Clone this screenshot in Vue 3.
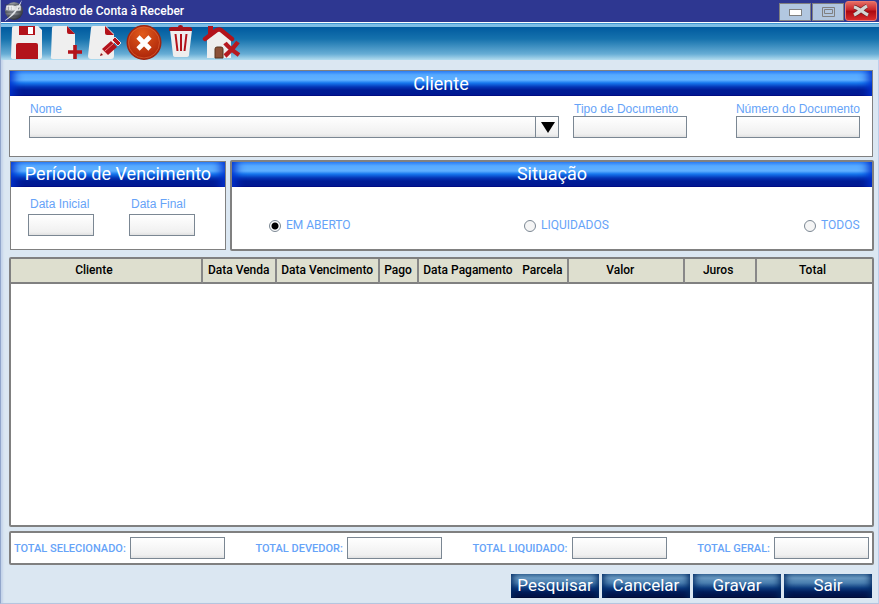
<script setup>
import { ref } from 'vue'

const situation = ref('aberto')
const situations = [
  { value: 'aberto', text: 'EM ABERTO' },
  { value: 'liquidados', text: 'LIQUIDADOS' },
  { value: 'todos', text: 'TODOS' }
]
const totals = [
  { id: 'selecionado', text: 'TOTAL SELECIONADO:' },
  { id: 'devedor', text: 'TOTAL DEVEDOR:' },
  { id: 'liquidado', text: 'TOTAL LIQUIDADO:' },
  { id: 'geral', text: 'TOTAL GERAL:' }
]
const columns = [
  { text: 'Cliente', width: 192, wide: true },
  { text: 'Data Venda', width: 74 },
  { text: 'Data Vencimento', width: 103 },
  { text: 'Pago', width: 39 },
  { text: 'Data Pagamento', width: 99, open: true },
  { text: 'Parcela', width: 52 },
  { text: 'Valor', width: 116 },
  { text: 'Juros', width: 72 },
  { text: 'Total', width: 115 }
]
const columnSum = columns.reduce((sum, c) => sum + c.width, 0)
const actions = ['Pesquisar', 'Cancelar', 'Gravar', 'Sair']
</script>

<template>
  <div class="window">
    <header class="titlebar">
      <svg class="logo" viewBox="0 0 20 22" aria-hidden="true">
        <defs>
          <radialGradient id="globe" cx=".4" cy=".35" r=".7">
            <stop offset="0" stop-color="#d4d6da" />
            <stop offset=".55" stop-color="#74787f" />
            <stop offset="1" stop-color="#25272d" />
          </radialGradient>
        </defs>
        <circle cx="10" cy="11" r="9" fill="url(#globe)" />
        <path d="M1 5h17M1 12h17M4 16h12" stroke="#3b3f48" stroke-width=".8" />
        <path d="M3 10V6h3v4M6 6h3v4M11 6v4M13 10V6h3v4z" fill="none" stroke="#fff" stroke-width="1.200" />
        <path d="M0 21C6 17 12 10 18 0 15 10 8 18 0 21z" fill="#e4e6ea" />
      </svg>
      <h1>Cadastro de Conta à Receber</h1>
      <div class="controls">
        <button class="control" aria-label="Minimizar"><svg viewBox="0 0 30 16"><rect x="9.500" y="5.500" width="12" height="6" fill="#fff" stroke="#808080" /></svg></button>
        <button class="control" aria-label="Maximizar"><svg viewBox="0 0 30 16"><path d="M9.500 3.500h12v9h-12zM11.500 5.500h8v4h-8z" fill="none" stroke="#808080" /></svg></button>
        <button class="control close" aria-label="Fechar"><svg viewBox="0 0 30 18"><path d="M8 5c5 1 8 5 14 8M21 4c-4 2-7 6-13 9" fill="none" stroke="#6d2225" stroke-width="4.500" /><path d="M8 5c5 1 8 5 14 8M21 4c-4 2-7 6-13 9" fill="none" stroke="#d4d6d4" stroke-width="3.300" /></svg></button>
      </div>
    </header>

    <nav class="toolbar" aria-label="Ferramentas">
      <button aria-label="Salvar">
        <svg viewBox="0 0 34 38"><path d="M3 3q0-2 2-2h24l4 4v27q0 2-2 2H5q-3 0-3-2z" fill="#efefef" /><path d="M10 1h16v9H10z" fill="#b3131b" /><path d="M19 2h5v7h-5z" fill="#fff" /><path d="M7 20q0-2 2-2h18q2 0 2 2v14H7z" fill="#b3131b" /></svg>
      </button>
      <button aria-label="Novo">
        <svg viewBox="0 0 34 38"><path d="M4 3q0-2 2-2h13l8 8v25H5q-3 0-2-3z" fill="#efefef" /><path d="M19 1l8 8h-6q-2 0-2-2z" fill="#b3131b" /><path d="M27 20v14M20 27h14" stroke="#b3131b" stroke-width="3.600" /></svg>
      </button>
      <button aria-label="Editar">
        <svg viewBox="0 0 34 38"><path d="M4 3q0-2 2-2h13l8 8v22q0 3-3 3H4q-3 0-3-3z" fill="#efefef" /><path d="M18 1l9 9h-7q-2 0-2-2z" fill="#b3131b" /><path d="M13 31l2-7 6 6z" fill="#f7e4de" /><path d="M13 31l1-3 2 2z" fill="#8e1015" /><path d="M15 24l9-8 6 6-9 8z" fill="#b3131b" /><path d="M18 26l9-8" stroke="#e98080" /><path d="M25 15l3-3 6 6-3 3z" fill="#b3131b" stroke="#fff" stroke-width=".8" /></svg>
      </button>
      <button aria-label="Cancelar operação">
        <svg viewBox="0 0 36 38"><defs><radialGradient id="cancel" cx=".45" cy=".25" r=".8"><stop offset="0" stop-color="#e15a1b" /><stop offset="1" stop-color="#a82109" /></radialGradient></defs><circle cx="18" cy="17.500" r="16.800" fill="url(#cancel)" stroke="#9e2510" stroke-width="1.400" /><circle cx="18" cy="17.500" r="15.500" fill="none" stroke="#e16a3a" stroke-width=".6" /><path d="M12 12l12 12M24 12L12 24" stroke="#fff" stroke-width="4.600" /></svg>
      </button>
      <button aria-label="Excluir">
        <svg viewBox="0 0 30 38"><path d="M3 5h22l-3 25q0 2-3 2H9q-3 0-3-2z" fill="#eee" /><path d="M2 4q0-2 3-2h6q0-2 2.500-2t2.500 2h6q3 0 3 2v2H2z" fill="#a5131a" /><path d="M8.500 9l2 17M14 9v17M19.500 9l-2 17" stroke="#b3131b" stroke-width="2" /></svg>
      </button>
      <button aria-label="Sair para o início">
        <svg viewBox="0 0 40 38"><path d="M5 14L18 4l11 10v19H5z" fill="#eee" /><path d="M6 1h5v9H6z" fill="#b3131b" /><path d="M3 14L15 5q2-1 4 0l11 9" fill="none" stroke="#b3131b" stroke-width="4.400" stroke-linecap="round" /><path d="M13 33V24q0-2 2-2h4q2 0 2 2v9z" fill="#8b5037" stroke="#59351f" /><path d="M23 18q4 5 14 12M36 17q-5 7-13 14" fill="none" stroke="#b71920" stroke-width="4.400" /></svg>
      </button>
    </nav>

    <main>
      <section class="panel customer">
        <h2>Cliente</h2>
        <div class="client">
          <div class="field grow">
            <label for="nome">Nome</label>
            <div class="combo">
              <select id="nome"><option></option></select>
              <span class="arrow"><svg viewBox="0 0 14 11" aria-hidden="true"><path d="M0 0h14L7 11z" /></svg></span>
            </div>
          </div>
          <div class="field type"><label for="tipo">Tipo de Documento</label><input id="tipo" type="text"></div>
          <div class="field number"><label for="numero">Número do Documento</label><input id="numero" type="text"></div>
        </div>
      </section>

      <div class="filters">
        <section class="panel period">
          <h2>Período de Vencimento</h2>
          <div class="dates">
            <div class="field"><label for="inicial">Data Inicial</label><input id="inicial" type="text"></div>
            <div class="field"><label for="final">Data Final</label><input id="final" type="text"></div>
          </div>
        </section>
        <section class="panel thick">
          <h2>Situação</h2>
          <div class="radios" role="radiogroup" aria-label="Situação">
            <label v-for="s in situations" :key="s.value">
              <input v-model="situation" type="radio" name="situacao" :value="s.value">{{ s.text }}
            </label>
          </div>
        </section>
      </div>

      <section class="panel thick results">
        <table>
          <colgroup>
            <col v-for="c in columns" :key="c.text" :style="{ width: (c.width / columnSum) * 100 + '%' }">
          </colgroup>
          <thead>
            <tr><th v-for="c in columns" :key="c.text" scope="col" :class="{ wide: c.wide, open: c.open }">{{ c.text }}</th></tr>
          </thead>
          <tbody></tbody>
        </table>
      </section>

      <section class="panel thick totals">
        <div v-for="t in totals" :key="t.id" class="total">
          <label :for="t.id">{{ t.text }}</label><input :id="t.id" type="text">
        </div>
      </section>

      <div class="actions">
        <button v-for="a in actions" :key="a">{{ a }}</button>
      </div>
    </main>
  </div>
</template>

<style>
body { background: #dbe7f2; }
</style>

<style scoped>
* { box-sizing: border-box; }
.window {
  display: flex;
  flex-direction: column;
  min-height: 100vh;
  border-left: 1px solid #91a6cb;
  border-bottom: 1px solid #b5c5df;
  background: #dbe7f2;
  box-shadow: inset 3px 0 2px -1px #c5d4ea, inset -1px 0 #bdceeb;
  font-family: Roboto, "Liberation Sans", sans-serif;
  font-size: 12px;
}
button { padding: 0; border: 0; font-family: inherit; cursor: pointer; }
svg { display: block; }
.titlebar {
  display: flex;
  align-items: center;
  height: 22px;
  padding: 0 2px 0 3px;
  background: #2e3791;
  color: #fff;
}
.logo { width: 20px; height: 22px; }
h1 { margin: 0 0 0 4px; font-size: 12px; font-weight: 500; line-height: 22px; }
.controls { display: flex; align-items: flex-end; gap: 1px; margin-left: auto; }
.control { width: 32px; height: 18px; border: 1px solid #808080; background: #b2c7e0; }
.control svg { width: 30px; height: 16px; }
.close {
  height: 20px;
  border-color: #e97870;
  border-radius: 3px;
  background: linear-gradient(#e46b62, #c72127 45%, #a90810 50%, #d92b2b);
}
.close svg { height: 18px; }
.toolbar {
  display: flex;
  gap: 5px;
  height: 38px;
  padding: 2px 0 0 8px;
  border-top: 1px solid #fff;
  background: linear-gradient(#3d94d2 0 1px, #7dbde5 1px 4px, #005a9f 4px, #1672ad 16px, #67add5 31px, #b2dcef 37px);
}
.toolbar button { height: 38px; background: none; }
.toolbar svg { height: 38px; }
main { display: flex; flex: 1; flex-direction: column; padding: 10px 5px 5px 8px; }
.panel { border: 1px solid #808080; background: #fff; }
.customer { margin-right: 1px; }
.thick { border-width: 2px; border-radius: 2px; }
h2 {
  margin: 0;
  height: 25px;
  background: linear-gradient(#2f83f5, #57aaff 4px, #5fb0ff 9px, #1677ee 12px, #0435b6 16px, #001c96 19px, #001a91);
  box-shadow: inset 12px 0 10px -8px #0032d0, inset -12px 0 10px -8px #0032d0, inset 0 -1px #000c7e;
  color: #fff;
  font-size: 18px;
  font-weight: 400;
  line-height: 25px;
  text-align: center;
}
.filters h2 { line-height: 23px; }
.client { display: flex; padding: 6px 12px 18px 19px; }
.field { display: flex; flex-direction: column; }
.grow { flex: 1; }
.type { width: 114px; margin-left: 14px; }
.number { width: 124px; margin-left: 49px; }
.field label {
  padding-left: 1px;
  color: #66a3f8;
  font-family: "Liberation Sans", Arial, sans-serif;
  font-size: 12px;
  line-height: 14px;
  white-space: nowrap;
}
.number label { align-self: flex-end; padding-left: 0; }
input[type="text"], select {
  width: 100%;
  height: 22px;
  padding: 0 4px;
  border: 1px solid #7b8793;
  border-radius: 0;
  background: linear-gradient(#fff, #f0f0f0 17px, #e1e1e1);
  font: 12px Roboto, sans-serif;
}
select { appearance: none; }
.combo { position: relative; }
.arrow {
  position: absolute;
  top: 0;
  right: 0;
  display: grid;
  place-items: center;
  width: 24px;
  height: 22px;
  border-left: 1px solid #7b8793;
  pointer-events: none;
}
.arrow svg { width: 14px; height: 11px; }
.filters { display: flex; gap: 4px; margin: 3px 0 6px; }
.period { width: 216px; margin: 1px 0 1px 1px; }
.period + .panel { flex: 1; }
.dates { display: flex; gap: 35px; padding: 10px 17px 13px; }
.dates .field { gap: 3px; width: 66px; }
.dates label { padding-left: 2px; }
.radios {
  display: grid;
  grid-template-columns: 255fr 280fr 56fr;
  padding: 31px 12px 16px 37px;
}
.radios label { display: flex; align-items: center; gap: 5px; color: #66a3f8; line-height: 15px; }
.radios input {
  flex: none;
  appearance: none;
  width: 12px;
  height: 12px;
  margin: 0;
  border: 1px solid #7b8793;
  border-radius: 50%;
  background: #f5f5f5;
}
.radios input:checked { background: radial-gradient(circle, #000 3px, #fff 4px); }
.results { flex: 1; }
table { width: 100%; table-layout: fixed; border-spacing: 0; }
th {
  height: 25px;
  padding: 0;
  border-right: 2px solid #888;
  border-bottom: 2px solid #808080;
  background: #dedfcf;
  font-size: 12px;
  font-weight: 500;
  line-height: 23px;
  white-space: nowrap;
}
th.wide { padding-right: 24px; }
th:nth-child(n + 7) { padding-right: 12px; }
th:nth-child(n + 8) { padding-right: 4px; }
th.open, th:last-child { border-right: 0; }
.totals { display: flex; justify-content: space-between; margin-top: 4px; padding: 4px 3px; }
.total { display: flex; align-items: center; gap: 4px; }
.total label { color: #66a3f8; font-size: 11px; font-weight: 500; white-space: nowrap; }
.total input[type="text"] { width: 95px; }
.actions { display: flex; justify-content: flex-end; gap: 3px; padding: 9px 2px 0 0; }
.actions button {
  width: 88px;
  height: 24px;
  padding-bottom: 3px;
  background: linear-gradient(#3f709d, #6797c0 4px, #497eaf 9px, #0c3b7e 14px, #001b59 18px, #00103f);
  box-shadow: inset 7px 0 7px -5px #002963, inset -7px 0 7px -5px #002963, inset 0 -1px #000930;
  color: #fff;
  font-size: 17px;
  line-height: 20px;
}
</style>
